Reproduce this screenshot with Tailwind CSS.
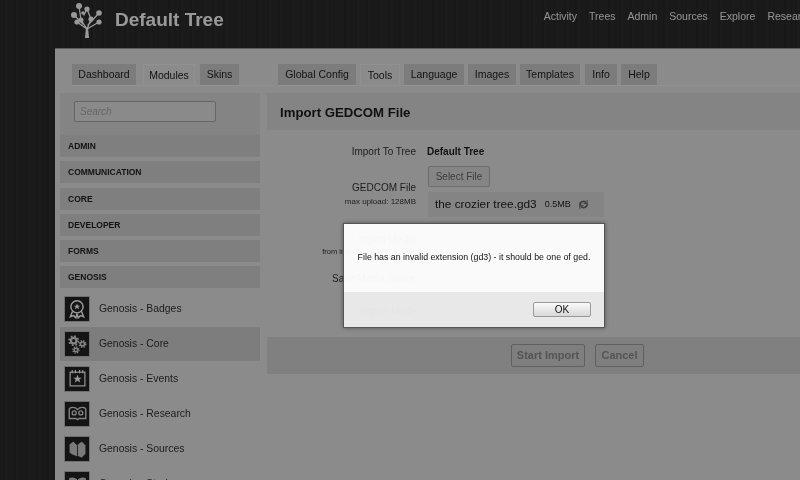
<!DOCTYPE html>
<html lang="en">
<head>
  <meta charset="UTF-8" />
  <title>Import GEDCOM File</title>
  <script src="https://cdn.jsdelivr.net/npm/@tailwindcss/browser@4"></script>
</head>
<body class="relative h-[480px] w-[800px] overflow-hidden bg-[#2b2b2b] font-['Liberation_Sans',Arial,sans-serif] text-[#222]">
  <div class="h-[480px] bg-[repeating-linear-gradient(90deg,#2c2c2c_0px,#2c2c2c_3px,#292929_3px,#292929_5px,#2e2e2e_5px,#2e2e2e_9px,#2a2a2a_9px,#2a2a2a_11px)] blur-[0.5px]">
    <!-- Header -->
    <header class="flex h-[48px] items-start whitespace-nowrap">
      <svg class="ml-[68px] mt-[1px] h-[38px] w-[36px] shrink-0" viewBox="0 0 36 38" fill="none" stroke="#fff" stroke-width="1.300" stroke-linecap="round">
        <path d="M19 28L9 21M19 28L13 19M19 28l4-10M19 28l12-7M20 24l11-12M15 23L6 14M13 19L11 5M23 18l-4-10M16 14l3-6" />
        <path d="M17 37l1-11h2l1 11z" fill="#fff" stroke="none" />
        <g fill="#fff" stroke="none">
          <circle cx="11" cy="5" r="3" /><circle cx="6" cy="14" r="3" /><circle cx="19" cy="8" r="2.600" />
          <circle cx="31" cy="12" r="2.800" /><circle cx="13" cy="19" r="2.500" /><circle cx="23" cy="18" r="2.600" />
          <circle cx="9" cy="21" r="2.600" /><circle cx="31" cy="21" r="2.600" /><circle cx="15" cy="12" r="1.800" />
        </g>
      </svg>
      <span class="ml-[11px] mt-[9px] shrink-0 text-[19px] leading-[22px] font-bold text-white">Default Tree</span>
      <nav class="ml-[320px] mt-[9px] flex shrink-0 gap-[12px] text-[10.500px] leading-[14px] text-white/95">
        <span>Activity</span><span>Trees</span><span>Admin</span><span>Sources</span><span>Explore</span><span>Research</span>
      </nav>
    </header>

    <!-- Panel -->
    <div class="ml-[55px] h-[432px] border-t border-[#9a9a9a] bg-[#e8e8e8]">
      <div class="flex h-[28px] items-start pt-[15px] text-[10.500px] leading-[21px]">
        <div class="ml-[17px] flex h-[22px] w-[202px] shrink-0 border-b border-[#f2f2f2]">
          <span class="h-[21px] w-[64px] bg-[#cfcfcf] text-center">Dashboard</span>
          <span class="ml-[7px] h-[22px] w-[52px] border-x border-t border-[#f2f2f2] text-center">Modules</span>
          <span class="ml-[5px] h-[21px] w-[39px] bg-[#cfcfcf] text-center">Skins</span>
        </div>
        <div class="ml-[4px] flex h-[22px] flex-1 border-b border-[#f2f2f2]">
          <span class="h-[21px] w-[78px] bg-[#cfcfcf] text-center">Global Config</span>
          <span class="ml-[4px] h-[22px] w-[40px] border-x border-t border-[#f2f2f2] text-center">Tools</span>
          <span class="ml-[4px] h-[21px] w-[60px] bg-[#cfcfcf] text-center">Language</span>
          <span class="ml-[4px] h-[21px] w-[48px] bg-[#cfcfcf] text-center">Images</span>
          <span class="ml-[4px] h-[21px] w-[60px] bg-[#cfcfcf] text-center">Templates</span>
          <span class="ml-[5px] h-[21px] w-[32px] bg-[#cfcfcf] text-center">Info</span>
          <span class="ml-[4px] h-[21px] w-[36px] bg-[#cfcfcf] text-center">Help</span>
        </div>
      </div>

      <div class="mt-[16px] flex items-start">
        <!-- Sidebar -->
        <aside class="ml-[5px] h-[388px] w-[200px] shrink-0 bg-[#e8e8e8]">
          <div class="h-[42px] bg-[#dcdcdc] pl-[14px] pt-[8px]">
            <div class="h-[21px] w-[142px] rounded-[2px] border border-[#aaa] bg-[#e6e6e6] pl-[5px] text-[10px] italic leading-[19px] text-[#aaa]">Search</div>
          </div>
          <div class="flex flex-col gap-[4.300px] text-[8.500px] font-bold leading-[22px] text-[#222]">
            <div class="h-[22px] bg-[#d4d4d4] pl-[8px]">ADMIN</div>
            <div class="h-[22px] bg-[#d4d4d4] pl-[8px]">COMMUNICATION</div>
            <div class="h-[22px] bg-[#d4d4d4] pl-[8px]">CORE</div>
            <div class="h-[22px] bg-[#d4d4d4] pl-[8px]">DEVELOPER</div>
            <div class="h-[22px] bg-[#d4d4d4] pl-[8px]">FORMS</div>
            <div class="h-[22px] bg-[#d4d4d4] pl-[8px]">GENOSIS</div>
          </div>
          <div class="mt-[3.500px] flex flex-col gap-[1px] text-[10.400px] text-[#333]">
            <div class="flex h-[34px] items-center pl-[5px]">
              <span class="flex size-[24px] items-center justify-center bg-[#222] shadow-[0_0_0_1px_#bbb]">
                <svg class="size-[20px]" viewBox="0 0 18 18" fill="none" stroke="#fff" stroke-width="1.300"><circle cx="9" cy="7" r="5.500" /><path d="M5 11l-2 5 3-1 2 2 1-4 1 4 2-2 3 1-2-5" /><path d="M9 4l.9 2h2l-1.600 1.300.6 2-1.900-1.200-1.900 1.200.6-2L6.100 6h2z" fill="#fff" stroke="none" /></svg>
              </span>
              <span class="ml-[10px]">Genosis - Badges</span>
            </div>
            <div class="flex h-[34px] items-center bg-[#d0d0d0] pl-[5px]">
              <span class="flex size-[24px] items-center justify-center bg-[#222] shadow-[0_0_0_1px_#bbb]">
                <svg class="size-[22px]" viewBox="0 0 20 20" fill="none" stroke="#ddd"><circle cx="7" cy="7" r="2.500" stroke-width="2" /><circle cx="7" cy="7" r="4.200" stroke-width="1.600" stroke-dasharray="1.600 1.700" /><circle cx="15" cy="10" r="1.800" stroke-width="1.500" /><circle cx="15" cy="10" r="3" stroke-width="1.300" stroke-dasharray="1.200 1.200" /><circle cx="9" cy="15.500" r="1.600" stroke-width="1.400" /><circle cx="9" cy="15.500" r="2.800" stroke-width="1.200" stroke-dasharray="1.100 1.100" /></svg>
              </span>
              <span class="ml-[10px]">Genosis - Core</span>
            </div>
            <div class="flex h-[34px] items-center pl-[5px]">
              <span class="flex size-[24px] items-center justify-center bg-[#222] shadow-[0_0_0_1px_#bbb]">
                <svg class="size-[19px]" viewBox="0 0 18 18" fill="none" stroke="#fff" stroke-width="1.100"><rect x="2" y="3" width="14" height="13" /><path d="M4 1v3M7 1v3M11 1v3M14 1v3" /><path d="M9 5.500l1.100 2.800H13l-2.300 1.700.9 2.900L9 11.200l-2.600 1.700.9-2.900L5 8.300h2.900z" fill="#fff" stroke="none" /></svg>
              </span>
              <span class="ml-[10px]">Genosis - Events</span>
            </div>
            <div class="flex h-[34px] items-center pl-[5px]">
              <span class="flex size-[24px] items-center justify-center bg-[#222] shadow-[0_0_0_1px_#bbb]">
                <svg class="size-[21px]" viewBox="0 0 19 19" fill="none" stroke="#ddd" stroke-width="1.200"><path d="M2 6q0-2 3-2t4.500 2q1.500-2 4.500-2t3 2v8H11l-1.500 1L8 14H2z" /><circle cx="6.500" cy="9" r="1.800" /><circle cx="12.500" cy="9" r="1.800" /></svg>
              </span>
              <span class="ml-[10px]">Genosis - Research</span>
            </div>
            <div class="flex h-[34px] items-center pl-[5px]">
              <span class="flex size-[24px] items-center justify-center bg-[#222] shadow-[0_0_0_1px_#bbb]">
                <svg class="size-[21px]" viewBox="0 0 20 20" fill="#ccc" stroke="#222" stroke-width=".8"><path d="M9 7l5-4 4 4v8l-4 4-5-2z" /><path d="M2 6l4-3 4 4v11l-5-2-3-2z" /></svg>
              </span>
              <span class="ml-[10px]">Genosis - Sources</span>
            </div>
            <div class="flex h-[34px] items-center pl-[5px]">
              <span class="flex size-[24px] items-center justify-center bg-[#222] shadow-[0_0_0_1px_#bbb]">
                <svg class="size-[21px]" viewBox="0 0 20 20" fill="#ccc"><path d="M2 5q4-2 7.500 1v11Q6 14 2 15zM18 5q-4-2-7.500 1v11q3.500-3 7.500-2z" /></svg>
              </span>
              <span class="ml-[10px]">Genosis - Stories</span>
            </div>
          </div>
        </aside>

        <!-- Main -->
        <main class="ml-[7px] flex-1 text-[10px]">
          <div class="h-[37px] bg-[#dcdcdc] pl-[13px] pt-[1px] text-[13.200px] font-bold leading-[37px] text-[#1c1c1c]">Import GEDCOM File</div>
          <div class="grid h-[207px] grid-cols-[149px_1fr] content-start bg-[#e8e8e8]">
            <div class="mt-[15px] h-[14px] text-right leading-[14px] text-[#333]">Import To Tree</div>
            <div class="ml-[11px] mt-[15px] h-[14px] font-bold leading-[14px]">Default Tree</div>

            <div class="mt-[22px] h-[40px] text-right">
              <div class="leading-[14px] text-[#333]">GEDCOM File</div>
              <div class="text-[8px] leading-[14px] text-[#333]">max upload: 128MB</div>
            </div>
            <div class="ml-[12px] mt-[7px]">
              <div class="h-[21px] w-[62px] rounded-[2px] border border-[#b5b5b5] bg-[#dedede] text-center leading-[19px] text-[#666]">Select File</div>
              <div class="mt-[5px] flex h-[25px] w-[176px] items-center bg-[#dcdcdc] pl-[7px] text-[11.800px] text-[#222]">
                <span>the crozier tree.gd3</span>
                <span class="ml-[8px] text-[9px]">0.5MB</span>
                <svg class="ml-[7px] size-[11px]" viewBox="0 0 12 12" fill="none" stroke="#666" stroke-width="1.800"><path d="M2 7a4 4 0 0 1 7-3M10 5a4 4 0 0 1-7 3" /><path d="M10 1v4H6M2 11V7h4" stroke-width="1" /></svg>
              </div>
            </div>

            <div class="mt-[12px] text-right leading-[14px] text-[#333]">
              <div>Import Media</div>
              <div class="text-[7.500px] leading-[10px]">from imported GEDCOM file</div>
            </div>
            <div class="ml-[12px] mt-[13px]"><span class="block size-[12px] rounded-full border border-[#aaa]"></span></div>

            <div class="mt-[15px] text-right leading-[14px] text-[#333]">Save Media Space</div>
            <div class="ml-[12px] mt-[16px]"><span class="block size-[12px] rounded-full border border-[#aaa]"></span></div>

            <div class="mt-[19px] text-right leading-[14px] text-[#333]">Import Mode</div>
            <div class="ml-[12px] mt-[20px]"><span class="block size-[12px] rounded-full border border-[#aaa]"></span></div>
          </div>
          <div class="flex h-[37px] items-center bg-[#d6d6d6] pl-[244px] text-[11px]">
            <span class="h-[23px] w-[74px] rounded-[2px] border border-[#a0a0a0] bg-[#d4d4d4] text-center leading-[21px] font-bold text-[#8c8c8c]">Start Import</span>
            <span class="ml-[10px] h-[23px] w-[49px] rounded-[2px] border border-[#a0a0a0] bg-[#d4d4d4] text-center leading-[21px] font-bold text-[#8c8c8c]">Cancel</span>
          </div>
        </main>
      </div>
    </div>
  </div>

  <!-- Modal -->
  <div class="absolute inset-0 bg-black/40"></div>
  <div class="absolute left-[343px] top-[223px] h-[105px] w-[262px] border border-[#555] text-[8.800px] text-[#111] shadow-[0_0_4px_rgba(0,0,0,0.4)] blur-[0.25px]">
    <div class="flex h-[68px] items-center justify-center bg-white/96">File has an invalid extension (gd3) - it should be one of ged.</div>
    <div class="flex h-[35px] items-start justify-end bg-[#ececec]/96 pr-[13px] pt-[10px]">
      <span class="h-[15px] w-[58px] rounded-[2px] border border-[#999] bg-[linear-gradient(#fafafa,#d8d8d8)] text-center text-[10px] leading-[13px]">OK</span>
    </div>
  </div>
</body>
</html>
